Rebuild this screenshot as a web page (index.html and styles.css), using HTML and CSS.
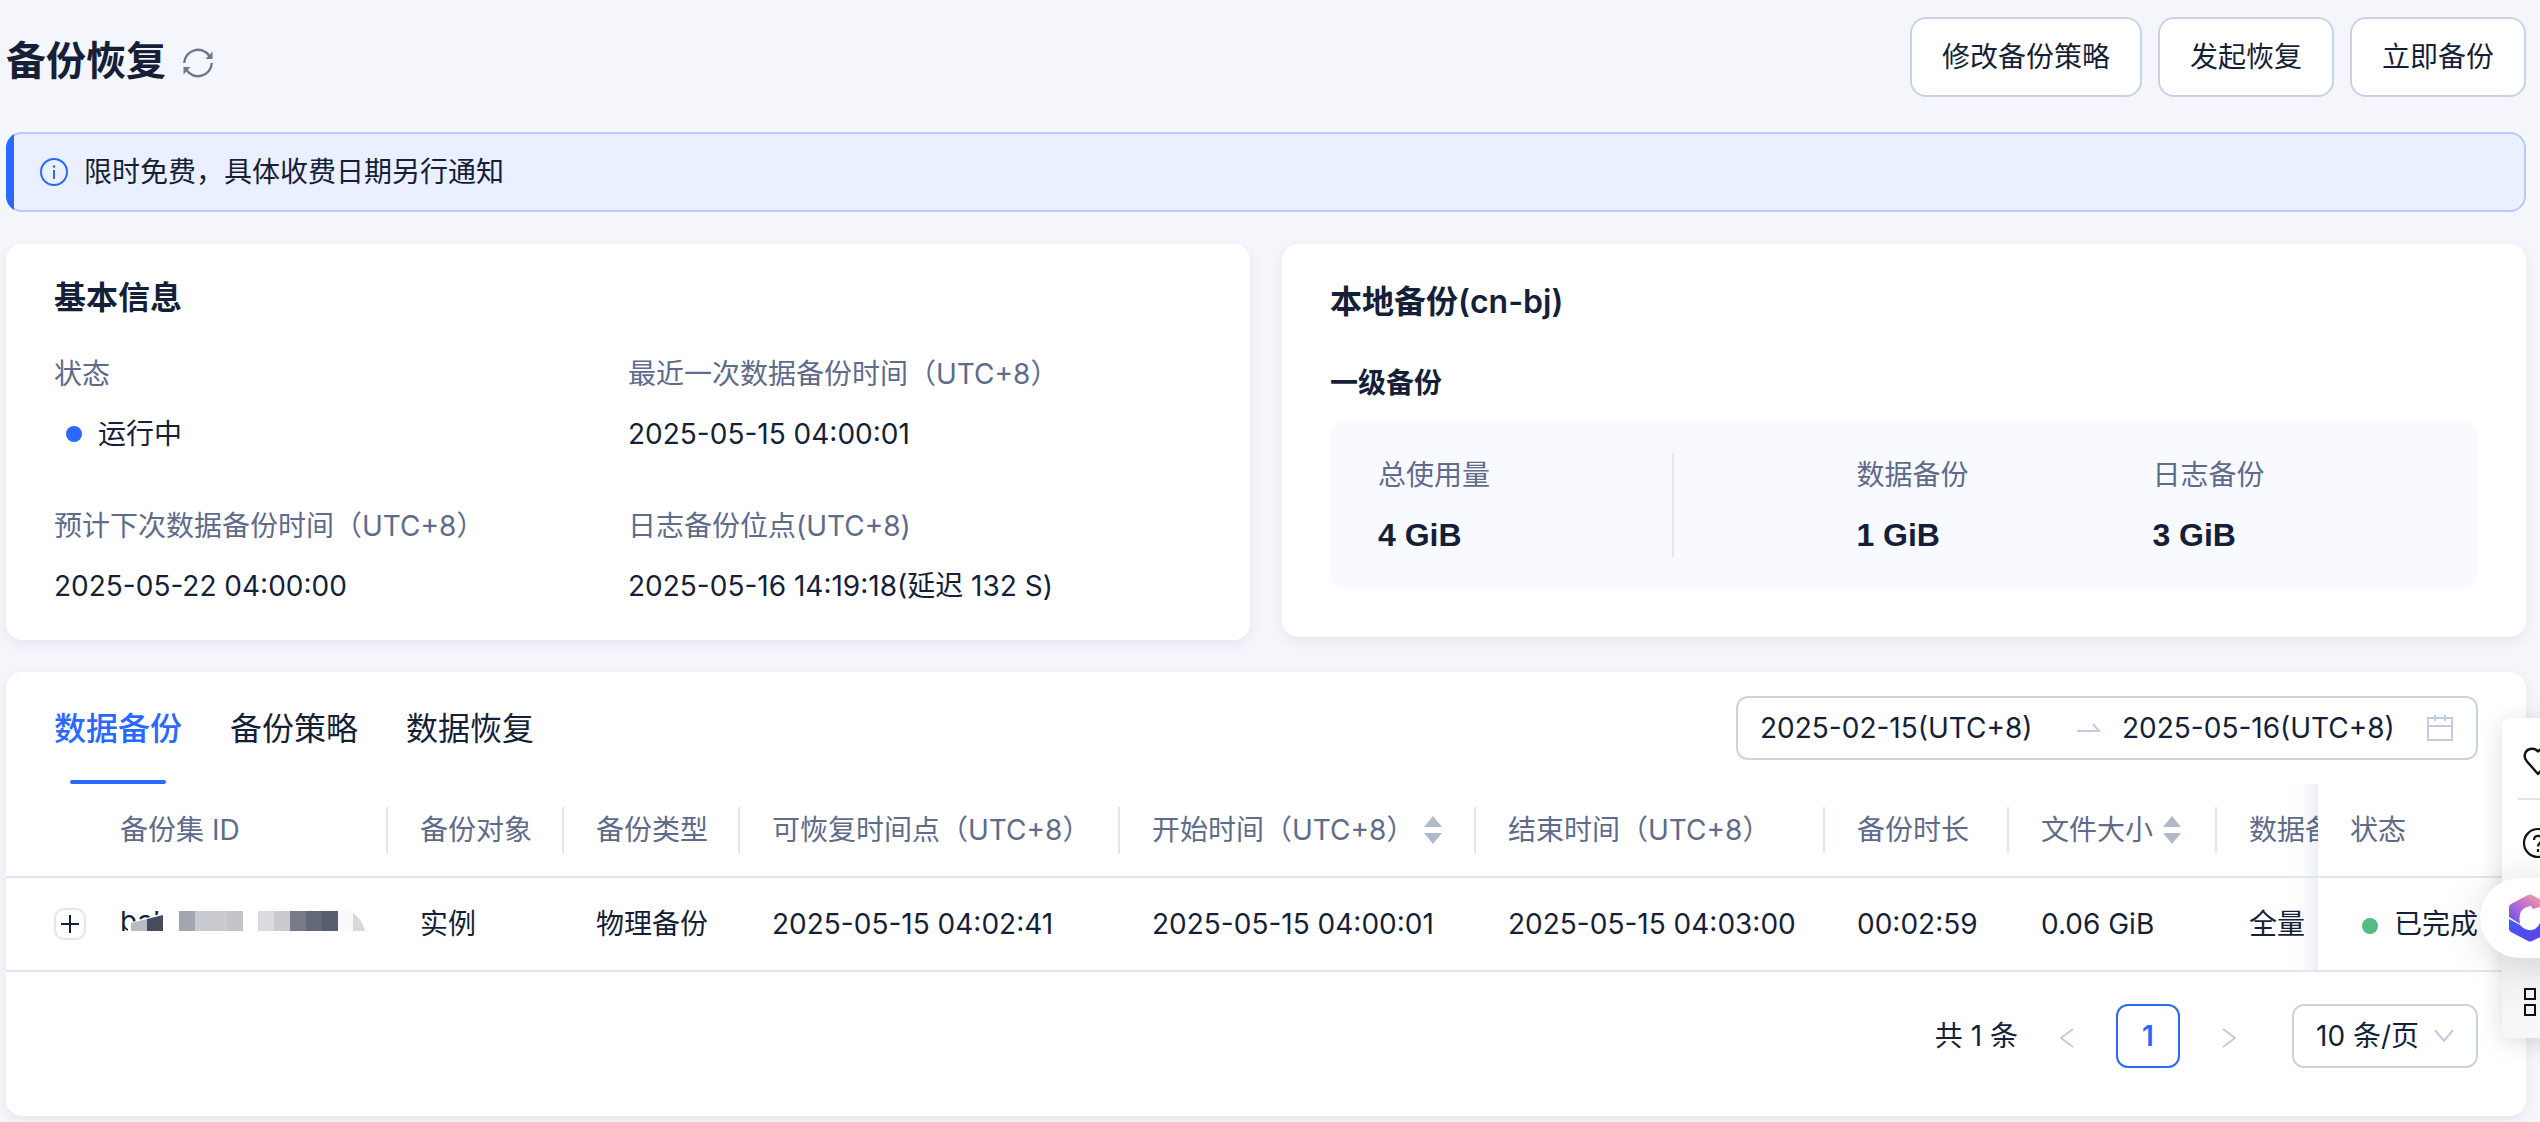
FILE: index.html
```html
<!DOCTYPE html>
<html lang="zh-CN">
<head>
    <meta charset="UTF-8">
    <meta name="viewport" content="width=device-width, initial-scale=1.0">
    <title>备份恢复</title>
    <link rel="stylesheet" href="styles.css">
</head>
<body>
    <div class="page">
        <header class="top">
            <h1>备份恢复</h1>
            <button type="button" class="refresh" aria-label="刷新">
                <svg viewBox="0 0 32 32" width="32" height="32" fill="none" stroke="#6f7888" stroke-width="2.4">
                    <path d="M2.2 16A13.8 13.8 0 0 1 27.5 9"/>
                    <path d="M29.8 16A13.8 13.8 0 0 1 4.5 23"/>
                    <path d="M30.5 4.5v7.500h-7z" fill="#6f7888" stroke="none"/>
                    <path d="M1.5 27.500v-7.500h7z" fill="#6f7888" stroke="none"/>
                </svg>
            </button>
            <div class="actions">
                <button type="button" class="btn">修改备份策略</button>
                <button type="button" class="btn">发起恢复</button>
                <button type="button" class="btn">立即备份</button>
            </div>
        </header>

        <div class="alert">
            <svg viewBox="0 0 28 28" width="28" height="28" fill="none" stroke="#2b68ff" stroke-width="2">
                <circle cx="14" cy="14" r="13"/>
                <path d="M14 12v9"/>
                <circle cx="14" cy="8.500" r="1.300" fill="#2b68ff" stroke="none"/>
            </svg>
            <span>限时免费，具体收费日期另行通知</span>
        </div>

        <div class="cards">
            <section class="card basic">
                <h2>基本信息</h2>
                <dl class="info">
                    <div>
                        <dt>状态</dt>
                        <dd><i class="dot blue"></i>运行中</dd>
                    </div>
                    <div>
                        <dt>最近一次数据备份时间（UTC+8）</dt>
                        <dd>2025-05-15 04:00:01</dd>
                    </div>
                    <div>
                        <dt>预计下次数据备份时间（UTC+8）</dt>
                        <dd>2025-05-22 04:00:00</dd>
                    </div>
                    <div>
                        <dt>日志备份位点(UTC+8)</dt>
                        <dd>2025-05-16 14:19:18(延迟 132 S)</dd>
                    </div>
                </dl>
            </section>

            <section class="card local">
                <h2>本地备份(cn-bj)</h2>
                <h3>一级备份</h3>
                <dl class="usage">
                    <div class="total">
                        <dt>总使用量</dt>
                        <dd>4 GiB</dd>
                    </div>
                    <div>
                        <dt>数据备份</dt>
                        <dd>1 GiB</dd>
                    </div>
                    <div>
                        <dt>日志备份</dt>
                        <dd>3 GiB</dd>
                    </div>
                </dl>
            </section>
        </div>

        <section class="card list">
            <div class="bar">
                <nav class="tabs">
                    <a href="#backup" class="active">数据备份</a>
                    <a href="#policy">备份策略</a>
                    <a href="#restore">数据恢复</a>
                </nav>
                <div class="range">
                    <input type="text" value="2025-02-15(UTC+8)" aria-label="开始日期">
                    <svg class="arrow" viewBox="0 0 24 12" width="24" height="12" fill="none" stroke="#c3cbe0" stroke-width="2">
                        <path d="M0 9h22l-6-7"/>
                    </svg>
                    <input type="text" value="2025-05-16(UTC+8)" aria-label="结束日期">
                    <svg viewBox="0 0 26 26" width="26" height="26" fill="none" stroke="#c3cbe0" stroke-width="2">
                        <path d="M1 3h24v22H1zM1 11h24M8 0v6M18 0v6"/>
                    </svg>
                </div>
            </div>

            <div class="scroll">
                <table>
                    <colgroup>
                        <col class="w-open"><col class="w-id"><col class="w-short"><col class="w-short">
                        <col class="w-point"><col class="w-start"><col class="w-end"><col class="w-cost">
                        <col class="w-state"><col class="w-mode"><col class="w-state">
                    </colgroup>
                    <thead>
                        <tr>
                            <td></td>
                            <th>备份集 ID</th>
                            <th>备份对象</th>
                            <th>备份类型</th>
                            <th>可恢复时间点（UTC+8）</th>
                            <th>
                                <span class="sort">开始时间（UTC+8）
                                    <svg viewBox="0 0 18 28" width="18" height="28" fill="#b0b9ca"><path d="M9 0l9 11H0zM0 17h18L9 28z"/></svg>
                                </span>
                            </th>
                            <th>结束时间（UTC+8）</th>
                            <th>备份时长</th>
                            <th>
                                <span class="sort">文件大小
                                    <svg viewBox="0 0 18 28" width="18" height="28" fill="#b0b9ca"><path d="M9 0l9 11H0zM0 17h18L9 28z"/></svg>
                                </span>
                            </th>
                            <th><span class="clip">数据备份方式</span></th>
                            <th class="fixed">状态</th>
                        </tr>
                    </thead>
                    <tbody>
                        <tr>
                            <td class="open">
                                <button type="button" class="plus" aria-label="展开">
                                    <svg viewBox="0 0 18 18" width="18" height="18" stroke="#151f38" stroke-width="2"><path d="M0 9h18M9 0v18"/></svg>
                                </button>
                            </td>
                            <td>
                                <!-- 备份集 ID 已打码 -->
                                <span class="mask">
                                    <span class="head">bak</span>
                                    <svg viewBox="0 0 246 20" width="246" height="20">
                                        <path d="M8 20v-8l19-5 22-7v20z" fill="#fff"/>
                                        <path d="M11 20v-8l16-4v12z" fill="#b8bbc1"/>
                                        <path d="M27 20V8l16-4v16z" fill="#474d5c"/>
                                        <path d="M59 0h16v20H59z" fill="#a2a6ae"/>
                                        <path d="M75 0h32v20H75z" fill="#cacbd0"/>
                                        <path d="M107 0h16v20h-16z" fill="#c4c5ca"/>
                                        <path d="M138 0h16v20h-16z" fill="#dbdce0"/>
                                        <path d="M154 0h16v20h-16z" fill="#c9cacf"/>
                                        <path d="M170 0h16v20h-16z" fill="#787c88"/>
                                        <path d="M186 0h16v20h-16z" fill="#636876"/>
                                        <path d="M202 0h16v20h-16z" fill="#595e6e"/>
                                        <path d="M218 0h16v20h-16z" fill="#fafafa"/>
                                        <path d="M233 2q9 6 12 18h-12z" fill="#d8d9dc"/>
                                    </svg>
                                </span>
                            </td>
                            <td>实例</td>
                            <td>物理备份</td>
                            <td>2025-05-15 04:02:41</td>
                            <td>2025-05-15 04:00:01</td>
                            <td>2025-05-15 04:03:00</td>
                            <td>00:02:59</td>
                            <td>0.06 GiB</td>
                            <td>全量</td>
                            <td class="fixed"><i class="dot green"></i>已完成</td>
                        </tr>
                    </tbody>
                </table>
            </div>

            <div class="pager">
                <span>共 1 条</span>
                <button type="button" class="step" aria-label="上一页">
                    <svg viewBox="0 0 14 20" width="14" height="20" fill="none" stroke="#c3cbe0" stroke-width="2"><path d="M13 1L1 10l12 9"/></svg>
                </button>
                <button type="button" class="num">1</button>
                <button type="button" class="step" aria-label="下一页">
                    <svg viewBox="0 0 14 20" width="14" height="20" fill="none" stroke="#c3cbe0" stroke-width="2"><path d="M1 1l12 9-12 9"/></svg>
                </button>
                <div class="size">
                    <select aria-label="每页条数">
                        <option>10 条/页</option>
                    </select>
                    <svg viewBox="0 0 20 14" width="20" height="14" fill="none" stroke="#c3cbe0" stroke-width="2"><path d="M1 1l9 11 9-11"/></svg>
                </div>
            </div>
        </section>
    </div>

    <!-- 右侧悬浮工具栏 -->
    <aside class="float">
        <button type="button" aria-label="收藏">
            <svg viewBox="0 0 32 32" width="32" height="32" fill="none" stroke="#111" stroke-width="2.400" stroke-linejoin="round">
                <path d="M16 5.500C12.500 1.500 6 2 3.500 6.500c-1.700 3.500-.700 6.500 1.500 9L16 28l11-12.500c2.200-2.500 3.200-5.500 1.500-9C26 2 19.500 1.500 16 5.500z"/>
            </svg>
        </button>
        <button type="button" class="line" aria-label="帮助">
            <svg viewBox="0 0 32 32" width="32" height="32" fill="none" stroke="#111" stroke-width="2.200">
                <circle cx="16" cy="16" r="14"/>
                <path d="M12 13c0-5.500 8-5.500 8-.500 0 3.200-4 3-4 7M16 22v3"/>
            </svg>
        </button>
        <button type="button" class="ai" aria-label="智能助手">
            <svg viewBox="0 0 42 48" width="42" height="48">
                <defs>
                    <linearGradient id="g1" x1="0" y1="1" x2="1" y2="0">
                        <stop offset="0" stop-color="#5a50f0"/>
                        <stop offset=".5" stop-color="#c56fd2"/>
                        <stop offset="1" stop-color="#ffb48c"/>
                    </linearGradient>
                    <linearGradient id="g2" x1="0" y1="0" x2="1" y2="1">
                        <stop offset="0" stop-color="#3f5cf5"/>
                        <stop offset="1" stop-color="#5b3fe8"/>
                    </linearGradient>
                </defs>
                <path d="M0 23V13Q0 11 2 10L19 1q2-1 4 0l17 9-16 5-2-3q-9 1-11 8-1 4 0 10z" fill="url(#g1)"/>
                <path d="M0 25l11 6q5 6 12 5 8-2 9-12l10-7v19q0 2-2 3l-17 8q-2 1-4 0L2 38q-2-1-2-3z" fill="url(#g2)"/>
            </svg>
        </button>
        <button type="button" class="more" aria-label="更多">
            <svg viewBox="0 0 28 28" width="28" height="28" fill="none" stroke="#111" stroke-width="2">
                <path d="M1 1h10v10H1zM17 1h10v10H17zM1 17h10v10H1zM17 17h10v10H17z"/>
            </svg>
        </button>
    </aside>
</body>
</html>
```

FILE: styles.css
```css
* {margin: 0; padding: 0; box-sizing: border-box;}
body {background: #f5f6fb; color: #151f38;
    font: 28px/40px Inter, "Noto Sans CJK SC", sans-serif;}
button, input, select {font: inherit; color: inherit; background: none; border: 0; outline: 0;}
button {cursor: pointer;}
svg {display: block; flex: none;}
h2 {font-size: 32px; line-height: 44px; font-weight: 600;}
h3 {font-size: 28px; line-height: 40px; font-weight: 600;}
dt {color: #5f6b8a;}

.page {padding: 17px 14px 6px 6px;}

/* 标题 */
.top {display: flex; align-items: center;}
.top h1 {font-size: 40px; line-height: 56px; font-weight: 600; padding-top: 8px;}
.refresh {margin: 12px 0 0 16px;}
.actions {display: flex; gap: 16px; margin-left: auto;}
.btn {height: 80px; padding: 0 30px; background: #fff; border: 2px solid #cbd3e3; border-radius: 16px;}

.alert {display: flex; align-items: center; gap: 16px; height: 80px; margin-top: 35px; padding-left: 32px;
    position: relative; background: #eaf0ff; border: 2px solid #b4cbfb; border-radius: 16px;}
.alert::before {content: ""; position: absolute; left: -2px; top: -2px; bottom: -2px; width: 16px;
    background: #2b68ff; border-radius: 16px 0 0 16px; clip-path: inset(0 8px 0 0);}

/* 卡片 */
.card {background: #fff; border-radius: 16px; box-shadow: 0 4px 12px rgba(20, 40, 90, .07);}
.cards {display: grid; grid-template-columns: 1fr 1fr; gap: 32px; align-items: start; margin: 32px 0;}
.basic {padding: 32px 48px 34px;}
.info {display: grid; grid-template-columns: 1fr 1fr; row-gap: 52px; margin-top: 34px;}
.info dd {display: flex; align-items: center; margin-top: 20px;}
.dot {width: 16px; height: 16px; border-radius: 50%; margin: 0 16px 0 12px;}
.blue {background: #2b68ff;}
.green {background: #57bb85; display: inline-block;}

.local {padding: 36px 48px 48px;}
.local h3 {margin: 39px 0 18px;}
.usage {display: grid; grid-template-columns: 30% 478px 1fr; padding: 32px 0; line-height: 44px;
    background: #f8faff; border-radius: 16px;}
.usage div {padding-left: 182px;}
.usage div:last-child {padding-left: 0;}
.usage .total {padding-left: 48px; border-right: 2px solid #e1e6f2;}
.usage dd {margin-top: 16px; font: bold 32px/44px "Liberation Sans", sans-serif;}

/* 列表 */
.bar {display: flex; justify-content: space-between; padding: 24px 48px 0;}
.tabs {display: flex; gap: 48px; font-size: 32px; line-height: 66px;}
.tabs a {position: relative; height: 88px; color: inherit; text-decoration: none;}
.tabs .active {color: #2b68ff; font-weight: 500;}
.tabs .active::after {content: ""; position: absolute; left: 16px; right: 16px; bottom: 0; height: 4px;
    background: #2b68ff; border-radius: 2px;}
.range {display: flex; align-items: center; width: 742px; height: 64px; padding: 0 23px 0 22px;
    border: 2px solid #cbd3e3; border-radius: 12px;}
.range input {flex: 1; width: 0; height: 40px;}
.range input:first-child {flex: 0 0 317px;}
.arrow {margin-right: 21px;}

.scroll {overflow-x: auto; scrollbar-width: none;}
table {width: 100%; min-width: 2520px; table-layout: fixed; border-collapse: separate; border-spacing: 0;}
.w-open {width: 82px;}
.w-id {width: 300px;}
.w-short {width: 176px;}
.w-point {width: 380px;}
.w-start {width: 356px;}
.w-end {width: 349px;}
.w-cost {width: 184px;}
.w-state {width: 208px;}
.w-mode {width: 101px;}
th, td {height: 94px; padding-left: 32px; text-align: left; white-space: nowrap; border-bottom: 2px solid #e2e6f4;}
th {color: #5f6b8a; font-weight: 400; position: relative;}
th + th::before {content: ""; position: absolute; left: -2px; top: 23px; width: 2px; height: 46px; background: #e2e6f4;}
.open {padding-left: 48px;}
.plus {display: flex; align-items: center; justify-content: center; width: 32px; height: 32px;
    border: 2px solid #e2e6f4; border-radius: 10px;}
.sort {display: flex; align-items: center; gap: 10px;}
.clip {display: block; overflow: hidden;}
.mask {display: block; position: relative; height: 20px; margin-bottom: 6px; overflow: hidden;}
.mask svg {position: relative;}
.head {position: absolute; left: 0; top: -10px;}
.fixed {position: sticky; right: 0; background: #fff;}
th.fixed::before, td.fixed::before {content: ""; position: absolute; left: -28px; top: 0; width: 28px; height: 100%;
    background: linear-gradient(to left, rgba(30, 50, 110, .08), rgba(30, 50, 110, .02) 50%, rgba(30, 50, 110, 0));}

.pager {display: flex; align-items: center; justify-content: flex-end; padding: 32px 48px 48px;}
.step {margin: 4px 42px 0;}
.num {width: 64px; height: 64px; border: 2px solid #2b68ff; border-radius: 12px; color: #2b68ff; font-weight: 600;}
.size {position: relative; margin-left: 14px;}
.size select {width: 186px; height: 64px; padding-left: 22px; appearance: none;
    border: 2px solid #cbd3e3; border-radius: 12px;}
.size svg {position: absolute; right: 24px; top: 25px; pointer-events: none;}

/* 悬浮栏贴在窗口右边，露出一半 */
.float {position: fixed; right: -34px; top: 718px; width: 72px; height: 320px; padding: 0 16px;
    background: linear-gradient(#fff 70%, #f1f1f4 75%, #f8f8fa); border-radius: 8px; box-shadow: 0 4px 24px rgba(0, 0, 0, .14);}
.float button {display: flex; align-items: center; justify-content: center; width: 40px; height: 80px; padding-top: 8px;}
.float .line {border-top: 2px solid #e4e4e6;}
.float .ai {width: 100px; margin-left: -38px; padding-top: 0; border-radius: 40px; background: #fff;
    position: relative; box-shadow: 0 4px 40px rgba(0, 0, 0, .14);}
```
